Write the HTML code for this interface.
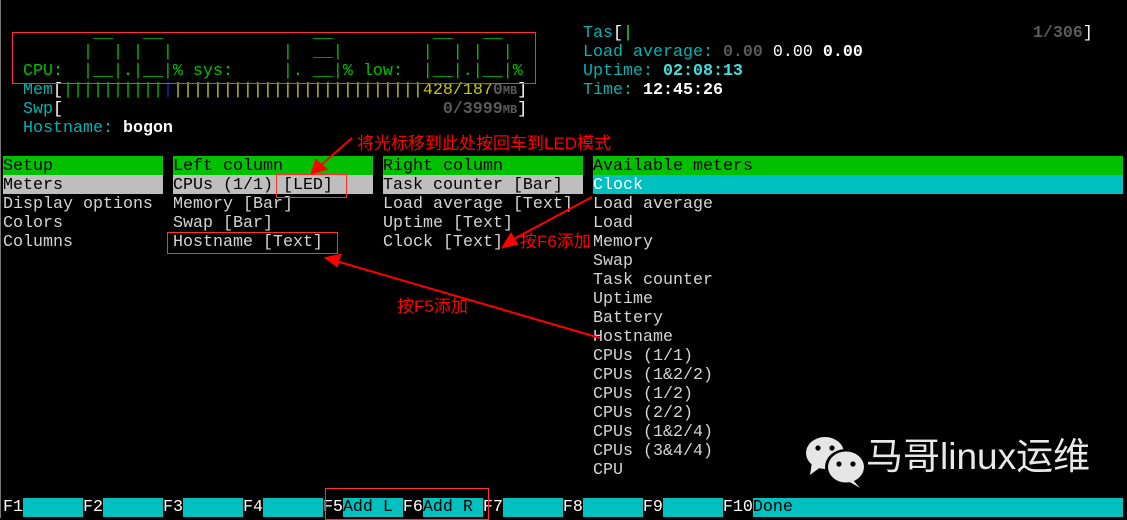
<!DOCTYPE html>
<html><head><meta charset="utf-8">
<style>
html,body{margin:0;padding:0;background:#000;}
body{width:1127px;height:518px;position:relative;overflow:hidden;font-family:"Liberation Mono",monospace;font-size:16.67px;color:#d4d4d4;}
.s{position:absolute;white-space:pre;line-height:19px;height:19px;}
.t{position:relative;top:1px}
.cy{color:#00b4b4}.gr{color:#00c000}.g{color:#5a5a5a;font-weight:bold}.w{color:#fff;font-weight:bold}
.ye{color:#c8c800}.bl{color:#2020c0}
.bg{background:#00c000;color:#000}.bgr{background:#bebebe;color:#000}.bc{background:#00c0c0;color:#000}
.cj{position:absolute;color:#ff0000;font-family:"Liberation Sans","Noto Sans CJK SC",sans-serif;font-size:17px;line-height:19px;white-space:nowrap}
.box{position:absolute;border:1px solid #ff3030;}
</style></head><body>
<div style="position:absolute;left:0;top:0;width:1px;height:518px;background:#777"></div>
<!-- LED meter -->
<div class="s gr" style="left:3px;top:24px">         __   __               __          __   __</div>
<div class="s gr" style="left:3px;top:43px">        |  | |  |           |  __|        |  | |  |</div>
<div class="s gr" style="left:3px;top:62px">  CPU:  |__|.|__|% sys:     |. __|% low:  |__|.|__|%</div>
<!-- Mem -->
<div class="s" style="left:3px;top:81px"><span class="cy">  Mem</span><span style="color:#fff">[</span><span class="gr">||||||||||</span><span class="bl">|</span><span class="ye">|||||||||||||||||||||||||428/187</span><span class="g">0<span style="font-size:12px">MB</span></span><span style="color:#fff">]</span></div>
<div class="s" style="left:3px;top:100px"><span class="cy">  Swp</span><span style="color:#fff">[</span>                                      <span class="g">0/3999<span style="font-size:12px">MB</span></span><span style="color:#fff">]</span></div>
<div class="s" style="left:3px;top:119px"><span class="cy">  Hostname: </span><span class="w">bogon</span></div>
<!-- right header -->
<div class="s" style="left:583px;top:24px"><span class="cy">Tas</span><span style="color:#fff">[</span><span style="color:#30e030">|</span>                                        <span class="g">1/306</span><span style="color:#fff">]</span></div>
<div class="s" style="left:583px;top:43px"><span class="cy">Load average: </span><span class="g">0.00</span> <span style="color:#fff">0.00</span> <span class="w">0.00</span></div>
<div class="s" style="left:583px;top:62px"><span class="cy">Uptime: </span><span class="w" style="color:#40e0e0">02:08:13</span></div>
<div class="s" style="left:583px;top:81px"><span class="cy">Time: </span><span class="w">12:45:26</span></div>
<!-- setup panels -->
<div class="s bg" style="left:3px;top:156px;width:160px"><span class="t">Setup</span></div>
<div class="s bg" style="left:173px;top:156px;width:200px"><span class="t">Left column</span></div>
<div class="s bg" style="left:383px;top:156px;width:200px"><span class="t">Right column</span></div>
<div class="s bg" style="left:593px;top:156px;width:530px"><span class="t">Available meters</span></div>
<div class="s bgr" style="left:3px;top:175px;width:160px"><span class="t">Meters</span></div>
<div class="s bgr" style="left:173px;top:175px;width:200px"><span class="t">CPUs (1/1) [LED]</span></div>
<div class="s bgr" style="left:383px;top:175px;width:200px"><span class="t">Task counter [Bar]</span></div>
<div class="s bc" style="left:593px;top:175px;width:530px;color:#fff"><span class="t">Clock</span></div>
<div class="s" style="left:3px;top:195px">Display options
Colors
Columns</div>
<div class="s" style="left:173px;top:195px">Memory [Bar]
Swap [Bar]
Hostname [Text]</div>
<div class="s" style="left:383px;top:195px">Load average [Text]
Uptime [Text]
Clock [Text]</div>
<div class="s" style="left:593px;top:195px;height:auto">Load average
Load
Memory
Swap
Task counter
Uptime
Battery
Hostname
CPUs (1/1)
CPUs (1&amp;2/2)
CPUs (1/2)
CPUs (2/2)
CPUs (1&amp;2/4)
CPUs (3&amp;4/4)
CPU</div>
<!-- function bar -->
<div class="s" style="left:3px;top:498px;color:#fff">F1<span class="bc">      </span>F2<span class="bc">      </span>F3<span class="bc">      </span>F4<span class="bc">      </span>F5<span class="bc">Add L </span>F6<span class="bc">Add R </span>F7<span class="bc">      </span>F8<span class="bc">      </span>F9<span class="bc">      </span>F10<span class="bc" style="display:inline-block;width:370px">Done</span></div>
<!-- annotations -->
<div class="box" style="left:12px;top:32px;width:522px;height:50px"></div>
<div class="box" style="left:276px;top:174px;width:69px;height:22px"></div>
<div class="box" style="left:167px;top:232px;width:169px;height:20px"></div>
<div class="box" style="left:325px;top:488px;width:162px;height:30px"></div>
<div class="cj" style="left:357px;top:134px">将光标移到此处按回车到LED模式</div>
<div class="cj" style="left:520px;top:232px">按F6添加</div>
<div class="cj" style="left:397px;top:297px">按F5添加</div>
<svg style="position:absolute;left:0;top:0" width="1127" height="518">
<g stroke="#ff0000" stroke-width="2" fill="#ff0000">
<line x1="352" y1="138" x2="320" y2="166"/><polygon points="312,173 316,160 326,169"/>
<line x1="592" y1="197" x2="512" y2="240"/><polygon points="503,247 511,234 517,244"/>
<line x1="600" y1="338" x2="336" y2="261"/><polygon points="326,258 340,255 337,266"/>
</g>
<g fill="#e6e6e6">
<ellipse cx="825" cy="453" rx="19" ry="16"/>
<polygon points="812,462 810,475 822,466"/>
</g>
<g fill="#000"><circle cx="818" cy="448" r="2.6"/><circle cx="832" cy="448" r="2.6"/></g>
<ellipse cx="846" cy="467" rx="21" ry="18" fill="#000"/>
<ellipse cx="846" cy="467" rx="18" ry="15.5" fill="#e6e6e6"/>
<polygon points="852,479 860,488 848,481" fill="#e6e6e6"/>
<g fill="#000"><circle cx="839" cy="464" r="2.6"/><circle cx="853" cy="464" r="2.6"/></g>
</svg>
<div style="position:absolute;left:866px;top:435px;font-family:'Liberation Sans','Noto Sans CJK SC',sans-serif;font-size:37px;line-height:44px;color:#e8e8e8;white-space:nowrap">马哥linux运维</div>
</body></html>
